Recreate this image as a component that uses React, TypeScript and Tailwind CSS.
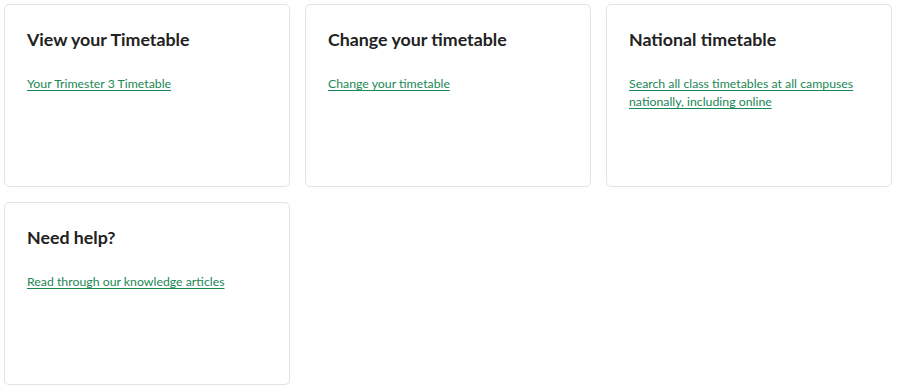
import React from "react";

const cards = [
  { title: "View your Timetable", link: "Your Trimester 3 Timetable" },
  { title: "Change your timetable", link: "Change your timetable" },
  { title: "National timetable", link: "Search all class timetables at all campuses nationally, including online" },
  { title: "Need help?", link: "Read through our knowledge articles" },
];

export default function App() {
  return (
    <div className="min-h-[392px] w-[904px] bg-white p-[4px]" style={{ fontFamily: "Lato, 'Noto Sans', sans-serif" }}>
      <div className="grid grid-cols-[286px_286px_286px] gap-x-[15px] gap-y-[15px]">
        {cards.map((c) => (
          <div key={c.title} className="h-[183px] rounded-[5px] border border-[#e3e3e3] bg-white px-[22px] pt-[23px]">
            <h2 className="text-[17.8px] font-bold leading-[22px] text-[#222222]">{c.title}</h2>
            <div className="mt-[25px] text-[12.3px] leading-[18px]">
              <a href="#" className="text-[#1a8754] underline underline-offset-[2px]">
                {c.link}
              </a>
            </div>
          </div>
        ))}
      </div>
    </div>
  );
}
